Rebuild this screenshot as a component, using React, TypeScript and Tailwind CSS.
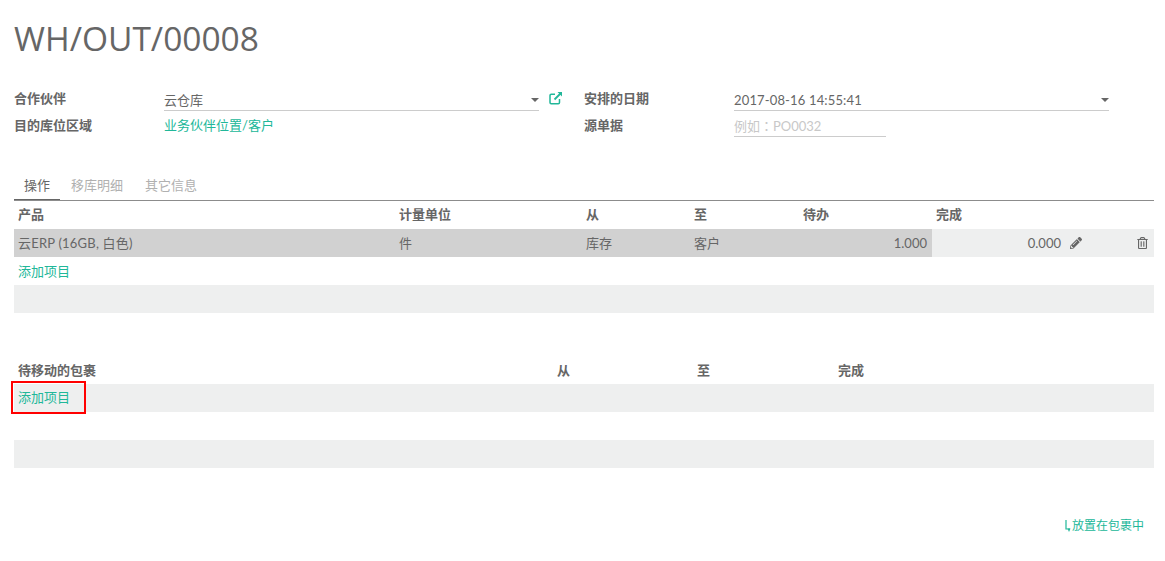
import { FaPencilAlt, FaRegTrashAlt } from 'react-icons/fa';

const font = "font-['Lato','Noto_Sans_CJK_SC',sans-serif]";

const Caret = () => <span className="h-0 w-0 border-x-[4px] border-t-[4px] border-x-transparent border-t-[#666666]" />;

const ExternalLink = () => (
    <svg width="14" height="14" viewBox="0 0 14 14" fill="none" stroke="#21b799" strokeWidth="1.5">
        <path d="M10.5 8v3.5a1.2 1.2 0 0 1-1.2 1.2H2.2A1.2 1.2 0 0 1 1 11.5V4.5a1.2 1.2 0 0 1 1.2-1.2H6" />
        <path d="M5.5 8.5 12 2" strokeWidth="1.8" />
        <path d="M8.5 1h4.5v4.5z" fill="#21b799" stroke="none" />
    </svg>
);

const LevelArrow = () => (
    <svg className="shrink-0" width="6" height="12" viewBox="0 0 6 12" fill="none" stroke="#21b799" strokeWidth="1.2">
        <path d="M1 0v9h4" />
        <path d="M2.5 8.5h3L4 12z" fill="#21b799" stroke="none" />
    </svg>
);

export default function App() {
    return (
        <div className={`${font} flex h-[561px] w-[1165px] flex-col bg-white pl-[14px] pr-[11px] text-[13px] leading-[18px] text-[#666666]`}>
            <h1 className="mt-[16px] font-['Open_Sans',sans-serif] text-[33.5px] leading-[44px] text-[#666666]">WH/OUT/00008</h1>

            <div className="mt-[26px] flex">
                <div className="flex w-[570px] flex-col">
                    <div className="flex h-[24px] items-center">
                        <label className="w-[150px] font-bold">合作伙伴</label>
                        <div className="mt-[2px] flex h-[23px] w-[375px] items-center justify-between border-b border-[#cccccc] pt-[3px]">
                            <span>云仓库</span>
                            <Caret />
                        </div>
                        <span className="ml-[10px]"><ExternalLink /></span>
                    </div>
                    <div className="mt-[2px] flex h-[24px] items-center pt-[2px]">
                        <label className="w-[150px] font-bold">目的库位区域</label>
                        <a className="text-[#21b799]">业务伙伴位置/客户</a>
                    </div>
                </div>
                <div className="flex flex-col">
                    <div className="flex h-[24px] items-center">
                        <label className="w-[150px] font-bold">安排的日期</label>
                        <div className="mt-[2px] flex h-[23px] w-[375px] items-center justify-between border-b border-[#cccccc] pt-[3px]">
                            <span className="tracking-[0.15px]">2017-08-16 14:55:41</span>
                            <Caret />
                        </div>
                    </div>
                    <div className="mt-[2px] flex h-[24px] items-center">
                        <label className="w-[150px] pt-[2px] font-bold">源单据</label>
                        <div className="mt-[1px] flex h-[24px] w-[152px] items-center border-b border-[#cccccc] pt-[4px] text-[#c8c8c8]">
                            例如<span className="font-['Noto_Sans_CJK_TC',sans-serif]">：</span>PO0032
                        </div>
                    </div>
                </div>
            </div>

            <div className="mt-[39px] flex h-[26px] border-b border-[#8c8c8c]">
                <div className="flex w-[46px] justify-center border-b border-[#666666] pt-[1px]">操作</div>
                <div className="ml-[11px] pt-[1px] text-[#b0b0b0]">移库明细</div>
                <div className="ml-[22px] pt-[1px] text-[#b0b0b0]">其它信息</div>
            </div>

            <div className="grid h-[28px] grid-cols-[381px_187px_108px_109px_1fr] items-center pb-[2px] pl-[4px] font-bold">
                <span>产品</span>
                <span>计量单位</span>
                <span>从</span>
                <span>至</span>
                <div className="flex">
                    <span className="w-[133px]">待办</span>
                    <span>完成</span>
                </div>
            </div>
            <div className="grid h-[28px] grid-cols-[381px_187px_108px_109px_1fr] items-center bg-[#d1d1d1]">
                <span className="pl-[4px] tracking-[0.2px]">云ERP (16GB, 白色)</span>
                <span className="pl-[4px]">件</span>
                <span className="pl-[4px]">库存</span>
                <span className="pl-[4px]">客户</span>
                <div className="flex h-full items-center">
                    <span className="w-[133px] pr-[5px] text-right">1.000</span>
                    <div className="flex h-full flex-1 items-center bg-[#eeefef]">
                        <span className="w-[129px] text-right">0.000</span>
                        <FaPencilAlt className="ml-[9px] h-[12px] w-[12px]" />
                        <FaRegTrashAlt className="ml-[55px] h-[12px] w-[11px]" />
                    </div>
                </div>
            </div>
            <div className="flex h-[28px] items-center pl-[4px] text-[#21b799]">添加项目</div>
            <div className="h-[28px] bg-[#eeefef]" />

            <div className="mt-[43px] grid h-[28px] grid-cols-[539px_140px_141px_1fr] items-center pl-[4px] font-bold">
                <span>待移动的包裹</span>
                <span>从</span>
                <span>至</span>
                <span>完成</span>
            </div>
            <div className="flex h-[28px] items-center bg-[#eeefef] pb-[2px]">
                <a className="relative pl-[4px] text-[#21b799]">
                    添加项目
                    <span className="absolute -top-[7px] -left-[3px] h-[33px] w-[75px] border-2 border-[#ff0000]" />
                </a>
            </div>
            <div className="h-[28px]" />
            <div className="h-[28px] bg-[#eeefef]" />

            <div className="mt-[49px] flex items-center justify-end gap-[1px] pr-[10px] text-[12px] text-[#21b799]">
                <LevelArrow />
                放置在包裹中
            </div>
        </div>
    );
}
